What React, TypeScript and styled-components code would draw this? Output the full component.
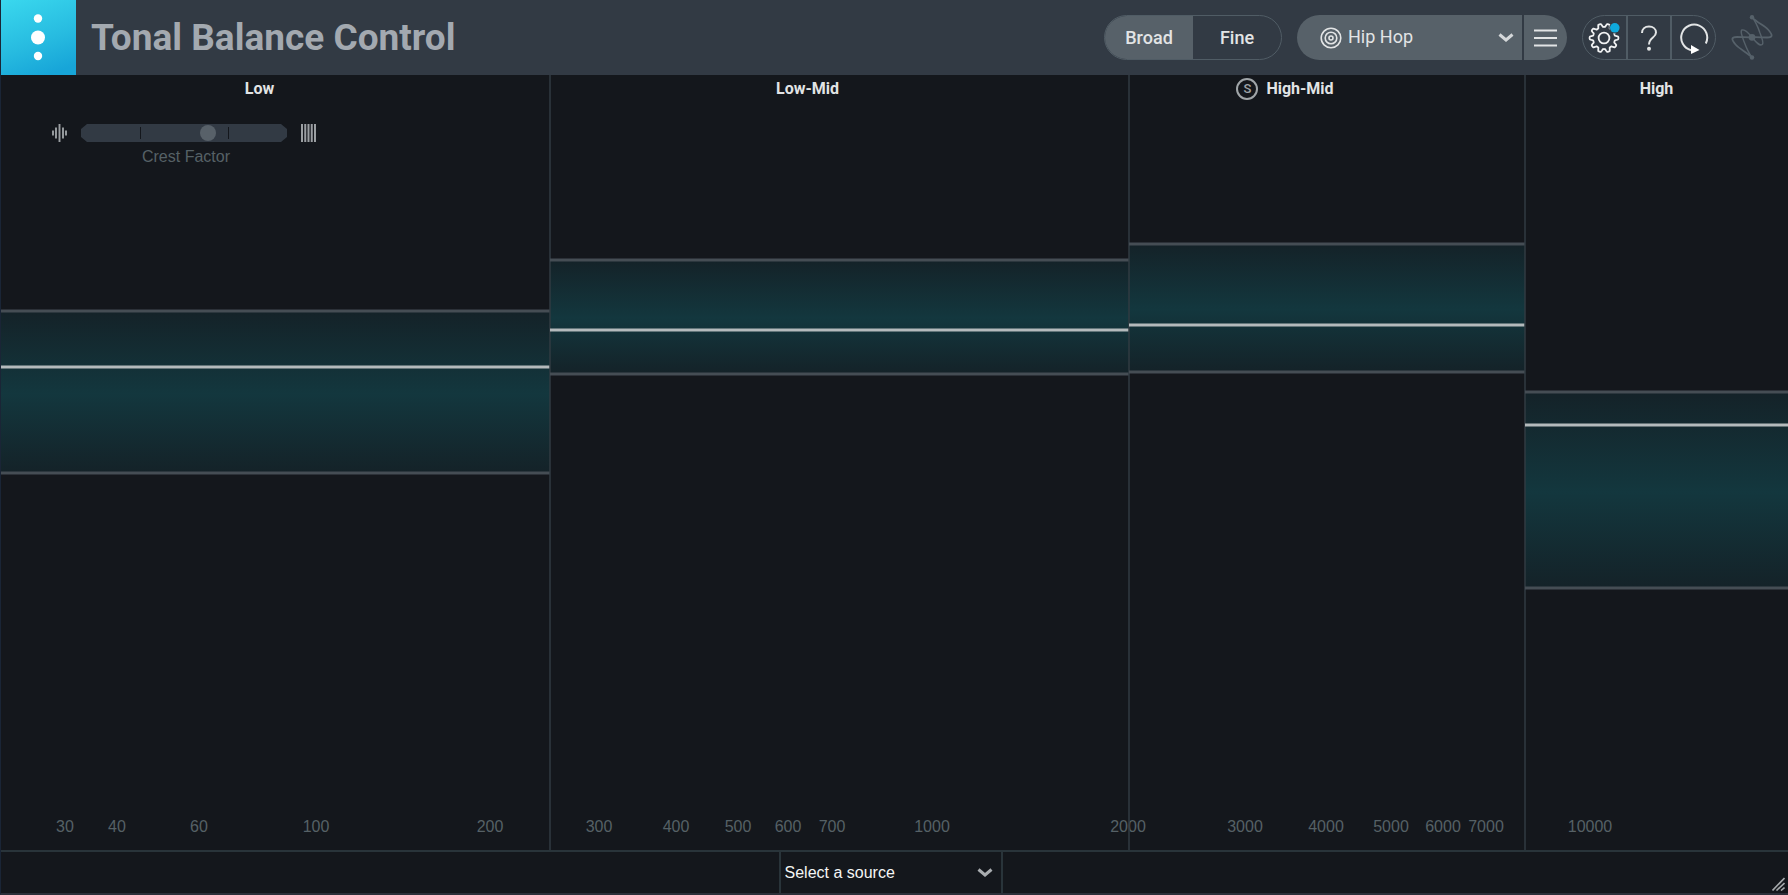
import React from "react";
import styled, { createGlobalStyle } from "styled-components";

const color = {
  header: "#323a44",
  pill: "#576169",
  pillLine: "#505c65",
  panel: "#14171c",
  line: "#29343a",
  divider: "#303b42",
  edge: "#454d54",
  level: "#b4babc",
  bright: "#e2e4e5",
  dim: "#566166",
};

const GlobalStyle = createGlobalStyle`
  *, *::before, *::after { box-sizing: border-box; }
  body {
    margin: 0;
    background: ${color.panel};
    font-family: Roboto, "Liberation Sans", sans-serif;
    font-size: 16px;
    color: ${color.bright};
  }
  button, select, input { font: inherit; color: inherit; margin: 0; }
`;

const Window = styled.div`
  display: flex;
  flex-direction: column;
  min-height: 100vh;
  border-left: 1px solid #1a2536;
  border-bottom: 2px solid #2b2f39;
`;

const Header = styled.header`
  display: flex;
  align-items: center;
  gap: 15px;
  height: 75px;
  padding-right: 15px;
  background: ${color.header};
`;

const Logo = styled.div`
  flex: none;
  width: 75px;
  height: 75px;
  background: linear-gradient(160deg, #3ad8ee 0%, #27bbe0 55%, #17a5d8 90%);
`;

const Title = styled.h1`
  flex: 1;
  margin: 0;
  font-size: 37px;
  line-height: 44px;
  font-weight: 700;
  white-space: nowrap;
  color: #a3a9b0;
`;

const Pill = styled.div<{ $filled?: boolean }>`
  display: flex;
  flex: none;
  height: 45px;
  overflow: hidden;
  border-radius: 23px;
  background: ${(p) => (p.$filled ? color.pill : "transparent")};
  border: ${(p) => (p.$filled ? "0" : `1px solid ${color.pillLine}`)};
`;

const ModeButton = styled.button<{ $active?: boolean }>`
  width: 88px;
  padding: 0;
  border: 0;
  font-size: 18px;
  font-weight: 500;
  background: ${(p) => (p.$active ? color.pill : "transparent")};
`;

const PresetBox = styled.label`
  display: grid;
  align-items: center;
  width: 227px;
  border-right: 2px solid ${color.header};
  & > * { grid-area: 1 / 1; }
  & > svg { pointer-events: none; }
`;

const PresetSelect = styled.select`
  appearance: none;
  width: 100%;
  height: 100%;
  padding: 0 40px 2px 51px;
  border: 0;
  background: transparent;
  font-size: 18px;
`;

const TargetIcon = styled.svg`
  margin-left: 23px;
`;

const Chevron = styled.svg`
  justify-self: end;
  margin-right: 8px;
`;

const IconButton = styled.button<{ $divided?: boolean }>`
  display: flex;
  align-items: center;
  justify-content: center;
  width: ${(p) => (p.$divided ? 46 : 43)}px;
  padding: 0;
  border: solid ${color.pillLine};
  border-width: ${(p) => (p.$divided ? "0 2px" : "0")};
  background: transparent;
`;

const Chart = styled.main`
  display: grid;
  flex: 1;
  min-height: 480px;
  & > * { grid-area: 1 / 1; }
`;

const Graph = styled.svg`
  width: 100%;
  height: 100%;
`;

const AxisLabel = styled.text`
  font-family: "Liberation Sans", sans-serif;
  font-size: 16px;
  fill: ${color.dim};
  text-anchor: middle;
`;

const Regions = styled.div`
  display: grid;
  grid-template-columns: 549fr 579fr 396fr 263fr;
`;

const Region = styled.section<{ $inset?: number }>`
  min-width: 0;
  & > h2 { margin-right: ${(p) => p.$inset ?? 0}px; }
`;

const RegionTitle = styled.h2`
  display: flex;
  align-items: center;
  justify-content: center;
  gap: 8px;
  height: 27px;
  margin: 0;
  font-size: 16px;
  font-weight: 700;
`;

const SoloButton = styled.button`
  width: 22px;
  height: 22px;
  padding: 0;
  border: 2px solid #a0a5a8;
  border-radius: 50%;
  background: transparent;
  color: #a0a5a8;
  font-size: 13px;
  line-height: 18px;
  font-weight: 500;
`;

const Crest = styled.div`
  display: grid;
  grid-template-columns: 15px 206px 15px;
  column-gap: 14px;
  row-gap: 5px;
  align-items: center;
  margin: 22px 0 0 51px;
`;

const CrestLabel = styled.label`
  grid-column: 2;
  padding-left: 4px;
  text-align: center;
  font-family: "Liberation Sans", sans-serif;
  line-height: 20px;
  color: ${color.dim};
`;

const CrestSlider = styled.input`
  appearance: none;
  width: 100%;
  height: 18px;
  background:
    linear-gradient(#14171c, #14171c) 59px 3px / 1px 12px no-repeat,
    linear-gradient(#14171c, #14171c) 147px 3px / 1px 12px no-repeat,
    ${color.header};
  clip-path: polygon(6px 0, 200px 0, 100% 5px, 100% 13px, 200px 100%, 6px 100%, 0 13px, 0 5px);
  &::-webkit-slider-thumb {
    appearance: none;
    width: 16px;
    height: 16px;
    border-radius: 50%;
    background: #586169;
  }
`;

const Footer = styled.footer`
  display: grid;
  grid-template-columns: 98fr 224px 99fr;
  height: 43px;
  border-top: 2px solid ${color.line};
`;

const SourceBox = styled.label`
  grid-column: 2;
  display: grid;
  align-items: center;
  border: solid ${color.line};
  border-width: 0 2px;
  & > * { grid-area: 1 / 1; }
  & > svg { pointer-events: none; }
`;

const SourceSelect = styled.select`
  appearance: none;
  width: 100%;
  height: 100%;
  padding: 0 36px 0 4px;
  border: 0;
  background: transparent;
  font-family: "Liberation Sans", sans-serif;
  font-size: 16px;
  color: #f4f5f5;
`;

const Grip = styled.svg`
  align-self: end;
  justify-self: end;
  margin: 0 3px 2px 0;
`;

type Band = { x: number; w: number; top: number; bottom: number; level: number };

const WIDTH = 1787;
const HEIGHT = 775;

const bands: Band[] = [
  { x: 0, w: 549, top: 236, bottom: 398, level: 292 },
  { x: 549, w: 579, top: 185, bottom: 299, level: 255 },
  { x: 1128, w: 396, top: 169, bottom: 297, level: 250 },
  { x: 1524, w: 263, top: 317, bottom: 513, level: 350 },
];

const ticks: [number, number][] = [
  [30, 64], [40, 116], [60, 198], [100, 315], [200, 489], [300, 598],
  [400, 675], [500, 737], [600, 787], [700, 831], [1000, 931], [2000, 1127],
  [3000, 1244], [4000, 1325], [5000, 1390], [6000, 1442], [7000, 1485], [10000, 1589],
];

const px = (v: number) => `${(v / WIDTH) * 100}%`;
const py = (v: number) => `${(v / HEIGHT) * 100}%`;

const gear = Array.from({ length: 120 }, (_, i) => {
  const a = (i / 120) * Math.PI * 2;
  const r = 12.7 + 1.7 * Math.tanh(2.5 * Math.cos(10 * a));
  return `${i ? "L" : "M"}${(16 + r * Math.cos(a)).toFixed(2)} ${(17 + r * Math.sin(a)).toFixed(2)}`;
}).join("") + "Z";

function ChevronIcon({ stroke }: { stroke: string }) {
  return (
    <Chevron width="16" height="10" viewBox="0 0 16 10" fill="none" stroke={stroke} strokeWidth="3">
      <path d="M1.5 1.5L8 7L14.5 1.5" />
    </Chevron>
  );
}

function Spectrum() {
  return (
    <Graph role="img" aria-label="Tonal balance by frequency">
      <defs>
        <linearGradient id="target" x1="0" y1="0" x2="0" y2="1">
          <stop offset="0" stopColor="#142228" />
          <stop offset="0.51" stopColor="#13373e" />
          <stop offset="1" stopColor="#142228" />
        </linearGradient>
      </defs>
      {ticks.map(([hz, x]) => (
        <AxisLabel key={hz} x={px(x)} y={py(757)}>{hz}</AxisLabel>
      ))}
      {bands.map((b) => (
        <g key={b.x}>
          <rect x={px(b.x)} y={py(b.top)} width={px(b.w)} height={py(b.bottom - b.top)} fill="url(#target)" />
          {b.x > 0 && (
            <line x1={px(b.x)} x2={px(b.x)} y1="0" y2="100%" stroke={color.divider} strokeWidth="1.5" />
          )}
          {[b.top, b.bottom].map((y) => (
            <line key={y} x1={px(b.x)} x2={px(b.x + b.w)} y1={py(y)} y2={py(y)} stroke={color.edge} strokeWidth="3" />
          ))}
          <line x1={px(b.x)} x2={px(b.x + b.w)} y1={py(b.level)} y2={py(b.level)} stroke={color.level} strokeWidth="3" />
        </g>
      ))}
    </Graph>
  );
}

export default function App() {
  return (
    <>
      <GlobalStyle />
      <Window>
        <Header>
          <Logo>
            <svg width="75" height="75" viewBox="0 0 75 75" fill="#fff">
              <circle cx="37" cy="18.5" r="4.2" />
              <circle cx="37" cy="37.5" r="7" />
              <circle cx="37" cy="56" r="4.2" />
            </svg>
          </Logo>
          <Title>Tonal Balance Control</Title>
          <Pill>
            <ModeButton $active aria-pressed="true">Broad</ModeButton>
            <ModeButton aria-pressed="false">Fine</ModeButton>
          </Pill>
          <Pill $filled>
            <PresetBox>
              <PresetSelect aria-label="Target">
                <option>Hip Hop</option>
              </PresetSelect>
              <TargetIcon width="22" height="22" viewBox="0 0 22 22" fill="none" stroke={color.bright} strokeWidth="1.6">
                <circle cx="11" cy="11" r="9.8" />
                <circle cx="11" cy="11" r="5.8" />
                <circle cx="11" cy="11" r="2" />
              </TargetIcon>
              <ChevronIcon stroke="#d4d7d9" />
            </PresetBox>
            <IconButton aria-label="Menu">
              <svg width="24" height="18" viewBox="0 0 24 18" stroke={color.bright} strokeWidth="2">
                <path d="M0 1.5H23M0 9H23M0 16.5H23" />
              </svg>
            </IconButton>
          </Pill>
          <Pill>
            <IconButton aria-label="Settings">
              <svg width="34" height="34" viewBox="0 0 34 34" fill="none" stroke="#f0f1f2" strokeWidth="1.8">
                <path d={gear} strokeLinejoin="round" />
                <circle cx="16" cy="17" r="5.4" />
                <circle cx="26.8" cy="6.8" r="5.6" fill={color.header} stroke="none" />
                <circle cx="26.8" cy="6.8" r="4.8" fill="#0fa9dc" stroke="none" />
              </svg>
            </IconButton>
            <IconButton $divided aria-label="Help">
              <svg width="18" height="26" viewBox="0 0 18 26" fill="none" stroke={color.bright} strokeWidth="2">
                <path d="M2 8C2 4 5 1.5 9 1.5C13 1.5 16 4 16 7.5C16 13 9 12 9 19.5" />
                <circle cx="9" cy="23.8" r="2" fill={color.bright} stroke="none" />
              </svg>
            </IconButton>
            <IconButton aria-label="Reset">
              <svg width="30" height="32" viewBox="0 0 30 32" fill="none" stroke={color.bright} strokeWidth="2">
                <path d="M12 28.2A13 13 0 1 1 26.8 21.5" />
                <path d="M12 23L20.5 28L12 32Z" fill="#fff" stroke="none" />
              </svg>
            </IconButton>
          </Pill>
          <svg width="42" height="45" viewBox="0 0 42 45" fill="none" stroke="#56616a" strokeWidth="1.8">
            <path d="M21 2C26 8 33 10 37 14.5C42 20 42 22.5 36 22.5C31 22.5 26 22 21 22.3C16 22.5 11 22 6 22C0 22 0 24.5 5 30C9 34.5 16 37 21 42.5" />
            <path d="M21 2C25 7 27 12 29 18C31 23 33 29 31 29.7C28 31 25 27 21 22.3C17 17.5 14 14 11 15C9 16 11 21 13 26.5C15 32 17 37 21 42.5" strokeWidth="1.4" />
            <circle cx="21" cy="2.2" r="2.2" fill="#56616a" stroke="none" />
            <circle cx="21" cy="22.3" r="3.4" fill="#56616a" stroke="none" />
            <circle cx="21" cy="42.5" r="2.2" fill="#56616a" stroke="none" />
          </svg>
        </Header>

        <Chart>
          <Spectrum />
          <Regions>
            <Region $inset={32}>
              <RegionTitle>Low</RegionTitle>
              <Crest>
                <svg width="15" height="18" viewBox="0 0 15 18" stroke="#9b9fa2" strokeWidth="1.9">
                  <path d="M1 6.5V11.5M4 3.5V14.5M7.5 0V18M11 3.5V14.5M14 6.5V11.5" />
                </svg>
                <CrestSlider id="crest" type="range" min="0" max="190" defaultValue="119" />
                <svg width="15" height="18" viewBox="0 0 15 18" stroke="#9b9fa2" strokeWidth="2">
                  <path d="M1 0V18M4.25 0V18M7.5 0V18M10.75 0V18M14 0V18" />
                </svg>
                <CrestLabel htmlFor="crest">Crest Factor</CrestLabel>
              </Crest>
            </Region>
            <Region $inset={64}>
              <RegionTitle>Low-Mid</RegionTitle>
            </Region>
            <Region $inset={84}>
              <RegionTitle>
                <SoloButton aria-label="Solo High-Mid">S</SoloButton>
                High-Mid
              </RegionTitle>
            </Region>
            <Region>
              <RegionTitle>High</RegionTitle>
            </Region>
          </Regions>
        </Chart>

        <Footer>
          <SourceBox>
            <SourceSelect aria-label="Source">
              <option>Select a source</option>
            </SourceSelect>
            <ChevronIcon stroke="#a9adb0" />
          </SourceBox>
          <Grip width="13" height="14" viewBox="0 0 13 14" stroke="#a5a8aa" strokeWidth="1.6">
            <path d="M0.5 13.5L12.5 1M4.5 13.5L12.5 6M9 13.5L12.5 10.5" />
          </Grip>
        </Footer>
      </Window>
    </>
  );
}
